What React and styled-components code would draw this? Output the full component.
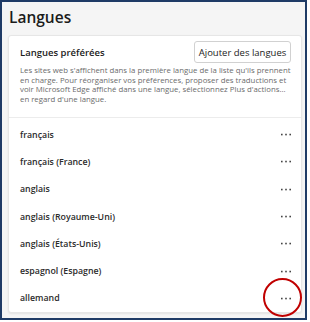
import React from 'react';
import styled, { createGlobalStyle } from 'styled-components';

const languages = [
  'français',
  'français (France)',
  'anglais',
  'anglais (Royaume-Uni)',
  'anglais (États-Unis)',
  'espagnol (Espagne)',
  'allemand',
];

function MoreIcon() {
  return (
    <svg width="10" height="3" viewBox="0 0 10 3">
      <rect x="0" y="0.75" width="1.6" height="1.6" fill="#444" />
      <rect x="4.2" y="0.75" width="1.6" height="1.6" fill="#444" />
      <rect x="8.4" y="0.75" width="1.6" height="1.6" fill="#444" />
    </svg>
  );
}

function App() {
  return (
    <>
      <GlobalStyle />
      <Frame>
        <Title>Langues</Title>
        <Card>
          <Header>
            <HeaderRow>
              <SectionTitle>Langues préférées</SectionTitle>
              <AddButton>Ajouter des langues</AddButton>
            </HeaderRow>
            <Description>
              Les sites web s'affichent dans la première langue de la liste qu'ils prennent
              en charge. Pour réorganiser vos préférences, proposer des traductions et
              voir Microsoft Edge affiché dans une langue, sélectionnez Plus d'actions...
              en regard d'une langue.
            </Description>
          </Header>
          <List>
            {languages.map((lang, i) => (
              <Row key={lang}>
                <LangName>{lang}</LangName>
                <MoreButton>
                  <MoreIcon />
                  {i === languages.length - 1 && <Highlight />}
                </MoreButton>
              </Row>
            ))}
          </List>
        </Card>
      </Frame>
    </>
  );
}

export default App;

const GlobalStyle = createGlobalStyle`
  body {
    margin: 0;
    background: #ffffff;
    font-family: "Open Sans", "Noto Sans", sans-serif;
  }
`;

const Frame = styled.div`
  box-sizing: border-box;
  width: 307px;
  height: 320px;
  border: 2px solid #1f3b66;
  background: #f5f5f5;
  padding: 0 3px 0 6px;
  overflow: hidden;
`;

const Title = styled.h1`
  margin: 0;
  height: 33px;
  padding-left: 1px;
  font-size: 15.5px;
  font-weight: 600;
  line-height: 30px;
  color: #1b1b1b;
`;

const Card = styled.div`
  box-sizing: border-box;
  width: 294px;
  height: 278px;
  background: #ffffff;
  border: 1px solid #e6e6e6;
  border-radius: 3px;
  box-shadow: 0 1px 2px rgba(0, 0, 0, 0.08);
`;

const Header = styled.div`
  padding: 5px 10px 0 11px;
  height: 76px;
  border-bottom: 1px solid #ececec;
`;

const HeaderRow = styled.div`
  display: flex;
  align-items: center;
  justify-content: space-between;
`;

const SectionTitle = styled.div`
  font-size: 9.5px;
  font-weight: 600;
  color: #1b1b1b;
`;

const AddButton = styled.button`
  box-sizing: border-box;
  height: 22px;
  width: 97px;
  padding: 0;
  border: 1px solid #d1d1d1;
  border-radius: 3px;
  background: #ffffff;
  font-family: inherit;
  font-size: 9.5px;
  color: #1b1b1b;
`;

const Description = styled.p`
  margin: 3px 0 0;
  font-size: 7.8px;
  line-height: 9.5px;
  color: #6b6b6b;
`;

const List = styled.div`
  padding-top: 3px;
`;

const Row = styled.div`
  display: flex;
  align-items: center;
  justify-content: space-between;
  height: 27.3px;
  padding: 0 10px 0 11px;
`;

const LangName = styled.span`
  font-size: 8.8px;
  font-weight: 600;
  color: #2b2b2b;
`;

const MoreButton = styled.span`
  position: relative;
  display: flex;
  align-items: center;
`;

const Highlight = styled.span`
  position: absolute;
  left: 50%;
  top: 50%;
  width: 35px;
  height: 35px;
  margin: -20px 0 0 -23px;
  border: 2.5px solid #c00000;
  border-radius: 50%;
`;
